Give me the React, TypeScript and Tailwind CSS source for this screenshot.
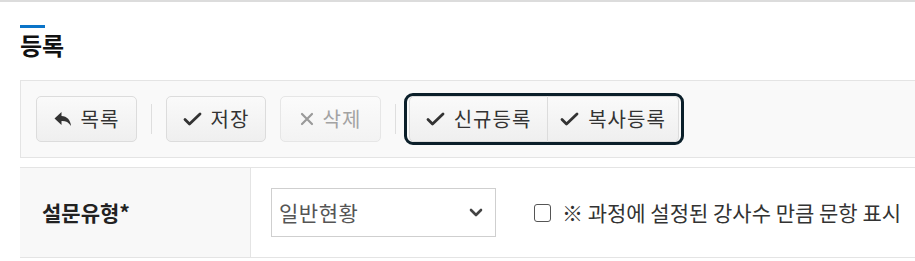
import React from 'react';

const font = { fontFamily: '"Noto Sans CJK KR", "Noto Sans", sans-serif' };

const ReplyIcon = () => (
    <svg width="18" height="16" viewBox="0 0 18 16" className="fill-[#333]">
        <path d="M7.5 1 L0.5 7.5 L7.5 14 L7.5 10 C11.5 9.8 14.5 11 17 15 C16.5 9 13 5.2 7.5 5 Z" />
    </svg>
);

const CheckIcon = ({ color = '#333' }: { color?: string }) => (
    <svg width="19" height="16" viewBox="0 0 19 16" fill="none" stroke={color} strokeWidth="2.8" strokeLinecap="round" strokeLinejoin="round">
        <path d="M2 8.5 L6.5 13 L17 3" />
    </svg>
);

const XIcon = () => (
    <svg width="14" height="14" viewBox="0 0 14 14" fill="none" stroke="#9a9a9a" strokeWidth="2.2" strokeLinecap="round">
        <path d="M2 2 L12 12 M12 2 L2 12" />
    </svg>
);

const Btn: React.FC<{ icon: React.ReactNode; label: string; disabled?: boolean; className?: string }> = ({ icon, label, disabled, className = '' }) => (
    <button
        className={`h-[46px] flex items-center justify-center gap-[9px] border border-[#dcdcdc] rounded-[5px] bg-gradient-to-b from-[#fafafa] to-[#efefef] text-[20px] tracking-[1px] ${disabled ? 'text-[#a3a3a3] border-[#e6e6e6] from-[#fbfbfb] to-[#f3f3f3]' : 'text-[#333]'} ${className}`}
    >
        {icon}
        <span className="leading-none">{label}</span>
    </button>
);

const Sep = () => <div className="w-px h-[30px] bg-[#dedede] mx-[14px]" />;

export default function App() {
    return (
        <div className="w-[915px] h-[261px] bg-white border-t-2 border-[#dcdcdc] overflow-hidden" style={font}>
            <div className="pl-5">
                <div className="pt-[23px]">
                    <div className="w-[25px] h-[3px] bg-[#0b74c8]" />
                    <h1 className="text-[24px] font-bold text-[#111] leading-none mt-[5px] h-[47px]">등록</h1>
                </div>

                <div className="h-[78px] border border-r-0 border-[#e4e4e4] bg-[#f9f9f9] flex items-center pl-[15px]">
                    <Btn icon={<ReplyIcon />} label="목록" className="w-[101px]" />
                    <Sep />
                    <Btn icon={<CheckIcon />} label="저장" className="w-[100px]" />
                    <Btn icon={<XIcon />} label="삭제" disabled className="w-[101px] ml-[14px]" />
                    <Sep />
                    <div className="ml-[-6px] flex border-[3px] border-[#0b1f2a] rounded-[9px] p-[2px] h-[52px] items-center">
                        <Btn icon={<CheckIcon />} label="신규등록" className="w-[139px] h-[44px] rounded-r-none" />
                        <Btn icon={<CheckIcon />} label="복사등록" className="w-[131px] h-[44px] rounded-l-none border-l-0" />
                    </div>
                </div>

                <div className="mt-[9px] border-t border-b border-[#e4e4e4] flex h-[91px]">
                    <div className="w-[231px] bg-[#f8f8f8] border-r border-[#e4e4e4] flex items-center pl-[22px]">
                        <span className="text-[21px] font-bold text-[#222]">설문유형*</span>
                    </div>
                    <div className="flex items-center pl-5">
                        <div className="w-[225px] h-[49px] border border-[#cfcfcf] bg-white flex items-center justify-between pl-[7px] pr-[12px]">
                            <span className="text-[21px] tracking-[0.5px] text-[#555]">일반현황</span>
                            <svg width="14" height="9" viewBox="0 0 14 9" fill="none" stroke="#444" strokeWidth="2.6" strokeLinecap="round" strokeLinejoin="round">
                                <path d="M2 2 L7 7 L12 2" />
                            </svg>
                        </div>
                        <label className="flex items-center ml-[38px] gap-[11px]">
                            <span className="w-[17px] h-[18px] border-[1.5px] border-[#555] rounded-[3px] bg-white" />
                            <span className="text-[21px] text-[#333]">※ 과정에 설정된 강사수 만큼 문항 표시</span>
                        </label>
                    </div>
                </div>
            </div>
        </div>
    );
}
